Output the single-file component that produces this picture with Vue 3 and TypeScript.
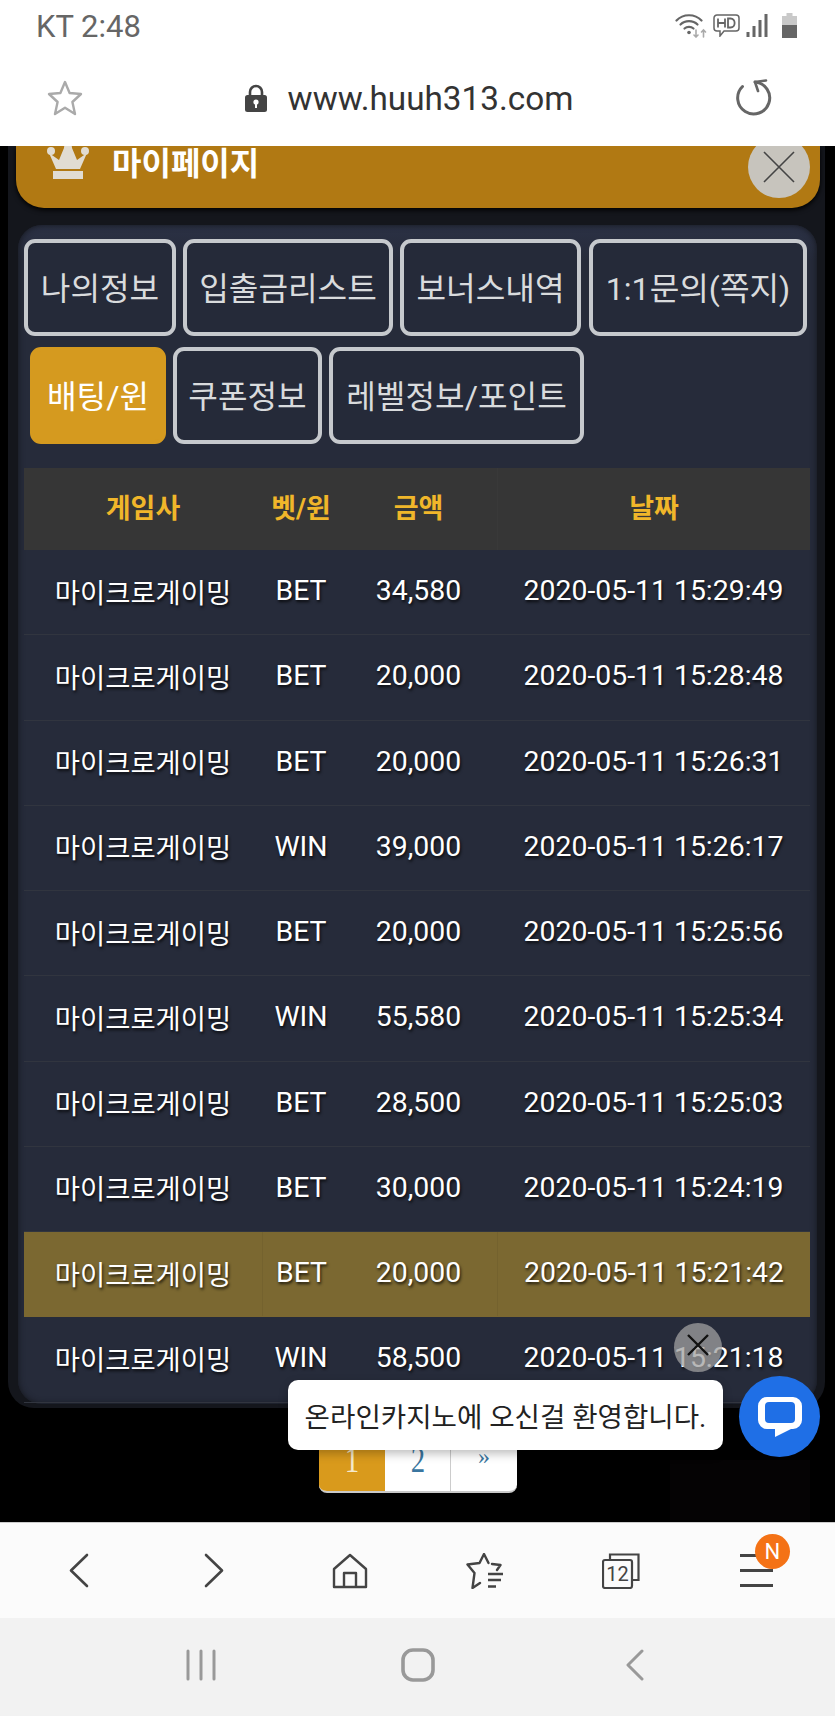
<script setup lang="ts">
interface Row { bet: string; amount: string; date: string; hot?: boolean }
const rows: Row[] = [
  { bet: 'BET', amount: '34,580', date: '2020-05-11 15:29:49' },
  { bet: 'BET', amount: '20,000', date: '2020-05-11 15:28:48' },
  { bet: 'BET', amount: '20,000', date: '2020-05-11 15:26:31' },
  { bet: 'WIN', amount: '39,000', date: '2020-05-11 15:26:17' },
  { bet: 'BET', amount: '20,000', date: '2020-05-11 15:25:56' },
  { bet: 'WIN', amount: '55,580', date: '2020-05-11 15:25:34' },
  { bet: 'BET', amount: '28,500', date: '2020-05-11 15:25:03' },
  { bet: 'BET', amount: '30,000', date: '2020-05-11 15:24:19' },
  { bet: 'BET', amount: '20,000', date: '2020-05-11 15:21:42', hot: true },
  { bet: 'WIN', amount: '58,500', date: '2020-05-11 15:21:18' },
]
const tabsTop = ['나의정보', '입출금리스트', '보너스내역', '1:1문의(쪽지)']
</script>

<template>
  <div class="phone">
    <header class="chrome">
      <div class="status">
        <span class="carrier">KT 2:48</span>
        <div class="status-icons">
          <svg width="32" height="25" viewBox="0 0 32 25" fill="none" stroke="#666" stroke-width="2.2" stroke-linecap="round">
            <path d="M1.5 7.5 C8 0.5 20 0.5 26.5 7.5" /><path d="M5.5 11.5 C10 7 18 7 22.5 11.5" /><path d="M9.5 15.5 C12 13.2 16 13.2 18.5 15.5" />
            <circle cx="14" cy="19.5" r="1.8" fill="#666" stroke="none" />
            <path d="M21 17 V24 M19 22 L21 24 L23 22 M28.5 24 V17 M26.5 19 L28.5 17 L30.5 19" stroke="#aaa" stroke-width="1.6" />
          </svg>
          <svg width="27" height="23" viewBox="0 0 27 23" fill="none">
            <path d="M4 1 H23 A3 3 0 0 1 26 4 V14 A3 3 0 0 1 23 17 H11 L7 22 V17 H4 A3 3 0 0 1 1 14 V4 A3 3 0 0 1 4 1 Z" stroke="#666" stroke-width="1.5" />
            <path d="M5 4.5 V13.5 M12 4.5 V13.5 M5 9 H12 M15 4.5 V13.5 H17.5 C23 13.5 23 4.5 17.5 4.5 Z" stroke="#666" stroke-width="1.8" />
          </svg>
          <svg width="22" height="23" viewBox="0 0 22 23" fill="#666">
            <rect x="0.5" y="18" width="3" height="5" /><rect x="6.5" y="12" width="3" height="11" /><rect x="12.5" y="6" width="3" height="17" /><rect x="18.5" y="0" width="3" height="23" />
          </svg>
          <svg width="17" height="25" viewBox="0 0 17 25">
            <path d="M5.5 0 H11.5 V3 H16 V25 H1 V3 H5.5 Z" fill="#c9c9c9" /><rect x="1" y="12" width="15" height="13" fill="#666" />
          </svg>
        </div>
      </div>
      <div class="urlbar">
        <svg class="fav" width="38" height="38" viewBox="0 0 38 38" fill="none" stroke="#aaa" stroke-width="2.4" stroke-linejoin="round">
          <path d="M19 3 L23.6 14 L35 15 L26.4 23 L29 35 L19 28.8 L9 35 L11.6 23 L3 15 L14.4 14 Z" />
        </svg>
        <div class="address">
          <svg width="24" height="30" viewBox="0 0 24 30">
            <path d="M6 13 V9 A6 6 0 0 1 18 9 V13" fill="none" stroke="#444" stroke-width="2.6" />
            <rect x="1" y="12" width="22" height="17" rx="2.5" fill="#444" />
            <circle cx="12" cy="19" r="2.6" fill="#fff" /><rect x="11" y="19" width="2" height="6" fill="#fff" />
          </svg>
          <span class="url">www.huuh313.com</span>
        </div>
        <svg class="reload" width="38" height="38" viewBox="0 0 38 38" fill="none" stroke="#666" stroke-width="3">
          <path d="M20 3 A16 16 0 1 1 7.5 7.5" stroke-linecap="round" />
          <path d="M31 1.5 L20 3 L23 12" stroke-width="2.6" stroke-linecap="round" stroke-linejoin="round" />
        </svg>
      </div>
    </header>

    <main class="viewport">
      <div class="modal">
        <div class="modal-title">
          <svg class="crown" width="42" height="36" viewBox="0 0 42 36" fill="#e1dcd2">
            <circle cx="4" cy="6" r="4" /><circle cx="21" cy="3" r="4" /><circle cx="38" cy="6" r="4" />
            <path d="M2 8 L12 15 L17 3 H25 L30 15 L40 8 L33 24 H9 Z" />
            <rect x="6" y="26" width="30" height="8" />
          </svg>
          <h1>마이페이지</h1>
          <span class="close-x">
            <svg width="32" height="32" viewBox="0 0 32 32" stroke="#444" stroke-width="1.6"><path d="M1 1 L31 31 M31 1 L1 31" /></svg>
          </span>
        </div>

        <section class="panel">
          <nav class="tabs tabs-top">
            <button v-for="t in tabsTop" :key="t" class="tab">{{ t }}</button>
          </nav>
          <nav class="tabs tabs-bottom">
            <button class="tab tab-active">배팅/윈</button>
            <button class="tab">쿠폰정보</button>
            <button class="tab">레벨정보/포인트</button>
          </nav>
          <div class="table">
            <div class="thead">
              <span class="c-game">게임사</span><span class="c-bet">벳/윈</span><span class="c-amount">금액</span><span class="c-date">날짜</span>
            </div>
            <div v-for="(r, i) in rows" :key="i" class="row" :class="{ hot: r.hot }">
              <span class="c-game">마이크로게이밍</span>
              <span class="c-bet">{{ r.bet }}</span>
              <span class="c-amount">{{ r.amount }}</span>
              <span class="c-date">{{ r.date }}</span>
            </div>
          </div>
        </section>
      </div>

      <div class="ad-shade"></div>

      <div class="pager">
        <span class="page page-on"><em>1</em></span><span class="page"><em>2</em></span><span class="page page-next">»</span>
      </div>

      <span class="tip-close">
        <svg width="22" height="22" viewBox="0 0 22 22" stroke="#111" stroke-width="2.4"><path d="M1 1 L21 21 M21 1 L1 21" /></svg>
      </span>
      <div class="tip">온라인카지노에 오신걸 환영합니다.</div>
      <div class="chat">
        <svg width="46" height="42" viewBox="0 0 46 42">
          <path fill="#fff" d="M10 1 H36 A9 9 0 0 1 45 10 V24 A9 9 0 0 1 36 33 H34 L18 41 V33 H10 A9 9 0 0 1 1 24 V10 A9 9 0 0 1 10 1 Z" />
          <rect x="8" y="6" width="30" height="21" rx="4" fill="#1f6fe6" />
        </svg>
      </div>
    </main>

    <footer class="toolbar">
      <svg width="20" height="35" viewBox="0 0 20 35" fill="none" stroke="#444" stroke-width="2.6" stroke-linecap="round" stroke-linejoin="round"><path d="M18 2 L2 17.5 L18 33" /></svg>
      <svg width="20" height="35" viewBox="0 0 20 35" fill="none" stroke="#444" stroke-width="2.6" stroke-linecap="round" stroke-linejoin="round"><path d="M2 2 L18 17.5 L2 33" /></svg>
      <svg width="36" height="36" viewBox="0 0 36 36" fill="none" stroke="#444" stroke-width="2.4" stroke-linejoin="round"><path d="M18 2 L2 16 V34 H34 V16 Z" /><path d="M12 34 V20 H24 V34" /></svg>
      <svg width="38" height="36" viewBox="0 0 38 36" fill="none" stroke="#444" stroke-width="2.4" stroke-linejoin="round" stroke-linecap="round">
        <path d="M26 11 L34.5 12 L31 17 M14 30 L6.5 35 L8.5 20 L1.5 11.5 L13.5 10 L18 1 L22.5 10" />
        <path d="M22 21 H37 M22 27 H35 M22 33.5 H30" stroke-width="2.6" stroke-linecap="butt" />
      </svg>
      <svg width="38" height="36" viewBox="0 0 38 36" fill="none" stroke="#444" stroke-width="2.2">
        <path d="M8 7 V1.5 H36.5 V27 H30" />
        <rect x="1" y="7" width="29" height="28" rx="2" />
        <text x="15.5" y="28" text-anchor="middle" class="tabcount">12</text>
      </svg>
      <div class="menu">
        <i /><i /><i />
        <b class="badge">N</b>
      </div>
    </footer>

    <div class="navbar">
      <svg width="30" height="32" viewBox="0 0 30 32" stroke="#999" stroke-width="3" stroke-linecap="round"><path d="M2 2 V30 M15 2 V30 M28 2 V30" /></svg>
      <svg width="34" height="34" viewBox="0 0 34 34" fill="none" stroke="#999" stroke-width="3.6"><rect x="2" y="2" width="30" height="30" rx="10" /></svg>
      <svg width="20" height="32" viewBox="0 0 20 32" fill="none" stroke="#999" stroke-width="3" stroke-linecap="round" stroke-linejoin="round"><path d="M17 2 L3 16 L17 30" /></svg>
    </div>
  </div>
</template>

<style>
html, body { margin: 0; background: #000; }
</style>

<style scoped>
.phone {
  width: 835px;
  height: 1716px;
  display: flex;
  flex-direction: column;
  overflow: hidden;
  font-family: Roboto, "Noto Sans CJK KR", sans-serif;
  background: #000;
}
.chrome { height: 146px; background: #fff; flex: none; }
.status {
  height: 50px;
  padding: 0 37px 0 36px;
  display: flex;
  align-items: center;
  justify-content: space-between;
}
.carrier { font-size: 31px; color: #666; position: relative; top: 1px; }
.status-icons { display: flex; align-items: center; gap: 6px; }
.status-icons svg:nth-child(3) { margin-right: 7px; }
.urlbar {
  height: 96px;
  padding: 0 62px 0 46px;
  display: flex;
  align-items: center;
  justify-content: space-between;
}
.address { display: flex; align-items: center; gap: 20px; margin-left: -2px; }
.url { font-size: 33.3px; color: #333; }
.viewport {
  position: relative;
  flex: 1;
  min-height: 0;
  overflow: hidden;
  background: #000;
}
.modal {
  height: 1262px;
  width: 817px;
  margin-left: 8px;
  padding: 0 5px 0 8px;
  box-sizing: border-box;
  background: #14161c;
  border-radius: 0 0 26px 26px;
}
.modal-title {
  height: 62px;
  background: #b17913;
  border-radius: 0 0 28px 28px;
  display: flex;
  align-items: flex-start;
  padding: 0 10px 0 31px;
  position: relative;
  margin-bottom: 17px;
  box-shadow: 0 2px 5px #000;
}
.crown { flex: none; margin-top: -1px; }
.modal-title h1 {
  margin: 0 0 0 23px;
  font-size: 32px;
  line-height: 36px;
  color: #fff;
  font-weight: 700;
}
.close-x {
  position: absolute;
  right: 10px;
  top: -10px;
  width: 62px;
  height: 62px;
  border-radius: 50%;
  background: #c7c4bd;
  display: flex;
  align-items: center;
  justify-content: center;
}
.panel {
  height: 1179px;
  width: 799px;
  margin-left: 2px;
  padding: 14px 0 0 6px;
  box-sizing: border-box;
  background: linear-gradient(#2b3145 0, #262b3a 36px);
  border-radius: 24px;
  box-shadow: inset 0 0 6px #14161c;
}
.tabs { display: flex; }
.tabs-top { gap: 7px; }
.tabs-top .tab:nth-child(4) { margin-left: 1px; }
.tabs-bottom { gap: 7px; margin-top: 11px; padding-left: 6px; }
.tab {
  height: 97px;
  padding: 0 0 4px;
  background: #252a39;
  border: 4px solid #c6c9cd;
  border-radius: 11px;
  color: #d9dbdd;
  font: 400 32.2px Roboto, "Noto Sans CJK KR", sans-serif;
  white-space: nowrap;
  box-sizing: border-box;
}
.tabs-top .tab:nth-child(1) { width: 152px; }
.tabs-top .tab:nth-child(2) { width: 210px; }
.tabs-top .tab:nth-child(3) { width: 181px; }
.tabs-top .tab:nth-child(4) { width: 218px; }
.tabs-bottom .tab:nth-child(2) { width: 149px; }
.tabs-bottom .tab:nth-child(3) { width: 255px; }
.tabs-bottom .tab-active {
  width: 136px;
  background: #d59a1f;
  border-color: #d59a1f;
  color: #fff;
}
.table { margin-top: 24px; width: 786px; }
.thead, .row {
  display: grid;
  grid-template-columns: 238px 78px 157px 313px;
  text-align: center;
}
.thead span, .row span {
  display: flex;
  align-items: center;
  justify-content: center;
  padding-bottom: 3px;
}
.thead .c-date { border-left: 1px solid rgba(255, 255, 255, 0.02); }
.row.hot .c-date, .row.hot .c-bet { border-left: 1px solid rgba(0, 0, 0, 0.05); }
.thead {
  height: 82px;
  background: #363636;
  color: #f0b62a;
  font-size: 27px;
  font-weight: 700;
}
.thead span { padding-bottom: 6px; }
.row {
  height: 85.25px;
  box-sizing: border-box;
  border-bottom: 1px solid #31353f;
  color: #fff;
  font-size: 28.4px;
  text-shadow: 1px 2px 3px rgba(0, 0, 0, 0.8);
}
.row .c-game { font-size: 27.4px; }
.row.hot { background: #7b6831; border-color: #7b6831; }
.ad-shade {
  position: absolute;
  left: 670px;
  top: 1314px;
  width: 140px;
  height: 60px;
  background: #050304;
}
.pager {
  position: absolute;
  left: 319px;
  top: 1284px;
  display: flex;
  height: 63px;
  width: 198px;
  box-sizing: border-box;
  border-radius: 0 0 8px 8px;
  overflow: hidden;
  background: #fff;
  border-bottom: 2px solid #c9c9c9;
}
.page {
  width: 66px;
  display: flex;
  align-items: center;
  justify-content: center;
  font: 36px "Liberation Serif", serif;
  color: #3a76a0;
  border-right: 1px solid #ccc;
  padding-bottom: 2px;
  box-sizing: border-box;
}
.page em { font-style: normal; transform: scaleX(0.8); }
.page-on { background: #d99a1c; color: #f5e9cc; border-right: 0; }
.page-next { font-size: 24px; border-right: 0; padding-bottom: 8px; }
.tip {
  position: absolute;
  left: 288px;
  top: 1234px;
  width: 435px;
  height: 70px;
  box-sizing: border-box;
  background: #fff;
  border-radius: 10px;
  box-shadow: 0 4px 10px rgba(0, 0, 0, 0.25);
  display: flex;
  align-items: center;
  justify-content: center;
  font-size: 27.6px;
  color: #222;
  white-space: nowrap;
}
.tip-close {
  position: absolute;
  left: 674px;
  top: 1177px;
  width: 48px;
  height: 49px;
  border-radius: 50%;
  background: rgba(160, 160, 160, 0.75);
  display: flex;
  align-items: center;
  justify-content: center;
  padding-bottom: 6px;
  box-sizing: border-box;
}
.chat {
  position: absolute;
  left: 739px;
  top: 1230px;
  width: 81px;
  height: 81px;
  border-radius: 50%;
  background: #1f6fe6;
  display: flex;
  align-items: center;
  justify-content: center;
}
.toolbar {
  height: 96px;
  flex: none;
  background: #fbfbfb;
  border-top: 1px solid #ccc;
  box-sizing: border-box;
  display: grid;
  grid-template-columns: repeat(6, 1fr);
  align-items: center;
  justify-items: center;
  padding: 0 11px 0;
}
.tabcount { font: 20px Roboto, sans-serif; fill: #444; stroke: none; }
.menu {
  position: relative;
  width: 33px;
  height: 33px;
  display: flex;
  flex-direction: column;
  justify-content: space-between;
}
.menu i { display: block; height: 3px; background: #444; }
.badge {
  position: absolute;
  left: 15px;
  top: -20px;
  width: 35px;
  height: 35px;
  border-radius: 50%;
  background: #f47216;
  color: #fff;
  font-size: 22px;
  font-weight: 400;
  display: flex;
  align-items: center;
  justify-content: center;
}
.navbar {
  height: 98px;
  flex: none;
  background: #f2f2f2;
  display: grid;
  grid-template-columns: repeat(3, 1fr);
  align-items: center;
  justify-items: center;
  padding: 0 92px 4px;
  box-sizing: border-box;
}
</style>
